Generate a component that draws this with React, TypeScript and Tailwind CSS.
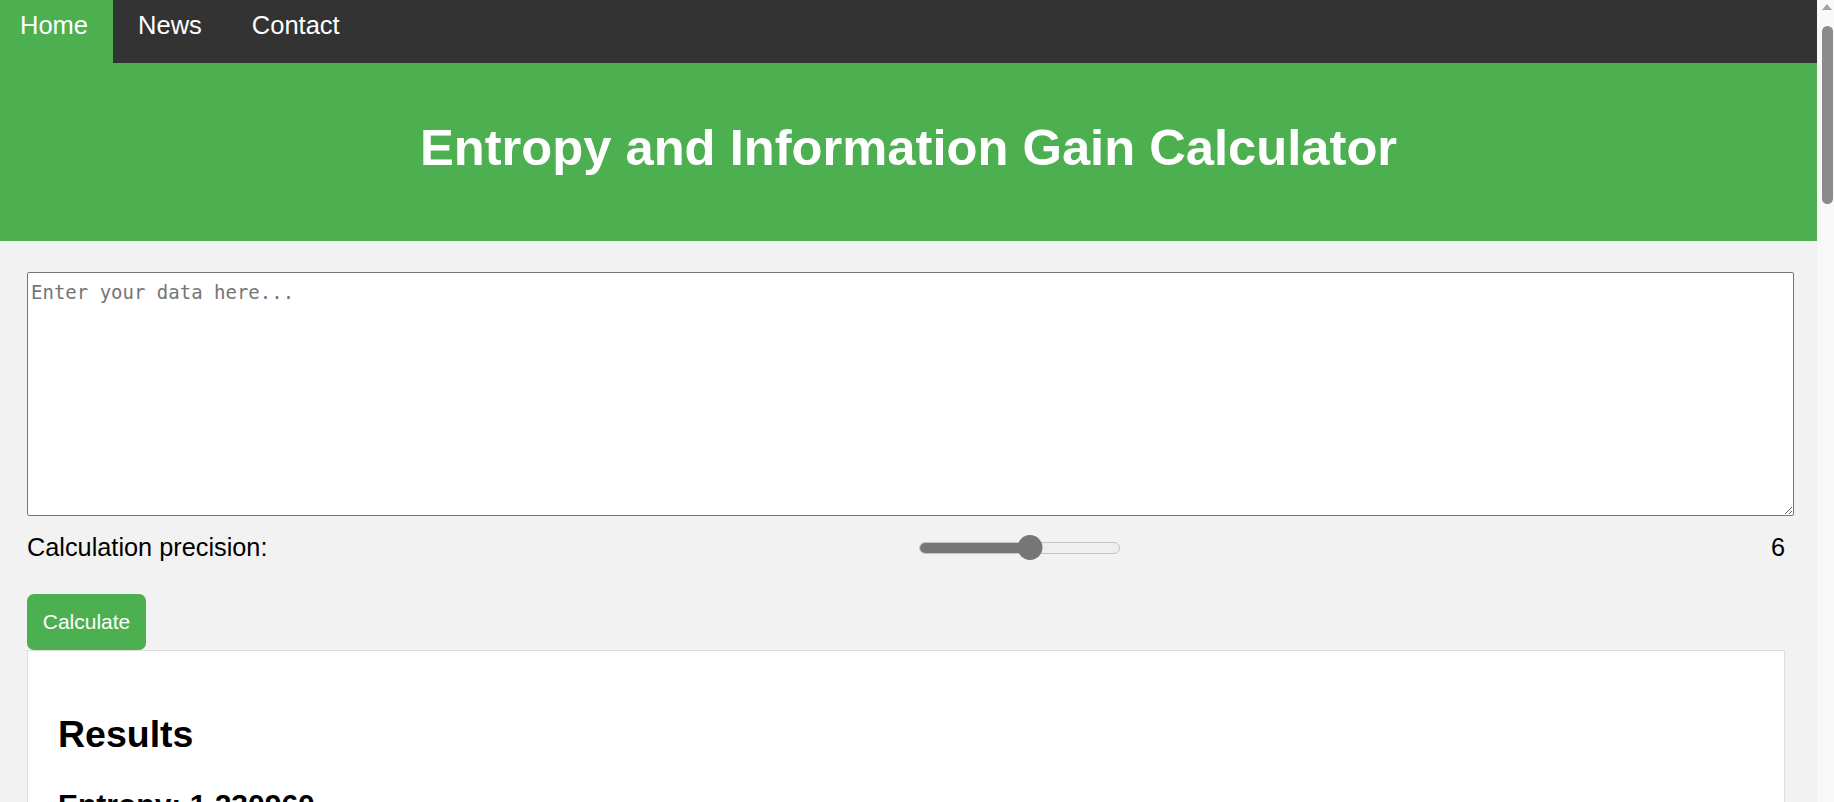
import React from 'react';

const sans = { fontFamily: '"Liberation Sans", Arial, sans-serif' };

function NavBar() {
  return (
    <nav className="flex h-[63px] shrink-0 bg-[#333333] text-[25.5px] leading-[29px] text-white">
      <a className="h-full bg-[#4caf50] pt-[11px] pl-[20px] pr-[25px]">Home</a>
      <a className="h-full pt-[11px] px-[25px]">News</a>
      <a className="h-full pt-[11px] px-[25px]">Contact</a>
    </nav>
  );
}

function PrecisionSlider({ value, min, max }: { value: number; min: number; max: number }) {
  const pct = ((value - min) / (max - min)) * 100;
  return (
    <div className="relative h-[25px] w-[201px]">
      <div className="absolute left-0 right-0 top-[6.5px] h-[12px] overflow-hidden rounded-full border border-[#c4c4c4] bg-[#efefef]">
        <div className="h-full bg-[#767676]" style={{ width: `${pct}%` }} />
      </div>
      <div
        className="absolute top-0 h-[25px] w-[25px] -translate-x-1/2 rounded-full bg-[#767676]"
        style={{ left: `${pct}%` }}
      />
    </div>
  );
}

function Scrollbar() {
  return (
    <div className="flex h-full w-[17px] shrink-0 flex-col bg-[#f8f8f8] pl-[5px]">
      <svg width="10" height="6" viewBox="0 0 10 6" className="mt-[4px]">
        <polygon points="5,0 10,6 0,6" fill="#a3a3a3" />
      </svg>
      <div className="mt-[16px] h-[178px] w-[11px] rounded-full bg-[#8a8a8a]" />
    </div>
  );
}

export default function App() {
  return (
    <div className="flex h-[802px] w-full overflow-hidden bg-[#f2f2f2]" style={sans}>
      <div className="flex min-w-0 flex-1 flex-col">
        <NavBar />
        <header className="h-[178px] shrink-0 bg-[#4caf50] pt-[56px] text-center">
          <h1 className="text-[50.7px] font-bold leading-[58px] text-white">
            Entropy and Information Gain Calculator
          </h1>
        </header>

        <main className="shrink-0 pl-[27px] pr-[32px] pt-[31px]">
          <textarea
            className="block h-[244px] w-[calc(100%+9px)] rounded-[2px] border border-[#767676] bg-white px-[3px] pt-[5px] text-[19px] text-black placeholder:text-[#757575]"
            style={{ fontFamily: '"DejaVu Sans Mono", "Liberation Mono", monospace' }}
            placeholder="Enter your data here..."
          />

          <div className="mt-[17px] flex h-[29px] items-center justify-between text-[25.3px] leading-[29px] text-black">
            <label>Calculation precision:</label>
            <PrecisionSlider value={6} min={1} max={10} />
            <span>6</span>
          </div>

          <button className="mt-[32px] h-[56px] w-[119px] rounded-[7px] bg-[#4caf50] text-[21px] text-white">
            Calculate
          </button>

          <section className="h-[400px] border border-[#dddddd] bg-white pl-[30px] pt-[62px] text-black">
            <h2 className="text-[37.5px] font-bold leading-[42px]">Results</h2>
            <h3 className="mt-[33px] text-[30px] font-bold leading-[34px]">Entropy: 1.230960</h3>
            <h3 className="mt-[32px] text-[30px] font-bold leading-[34px]">Information Gain: 0.312744</h3>
          </section>
        </main>
      </div>
      <Scrollbar />
    </div>
  );
}
